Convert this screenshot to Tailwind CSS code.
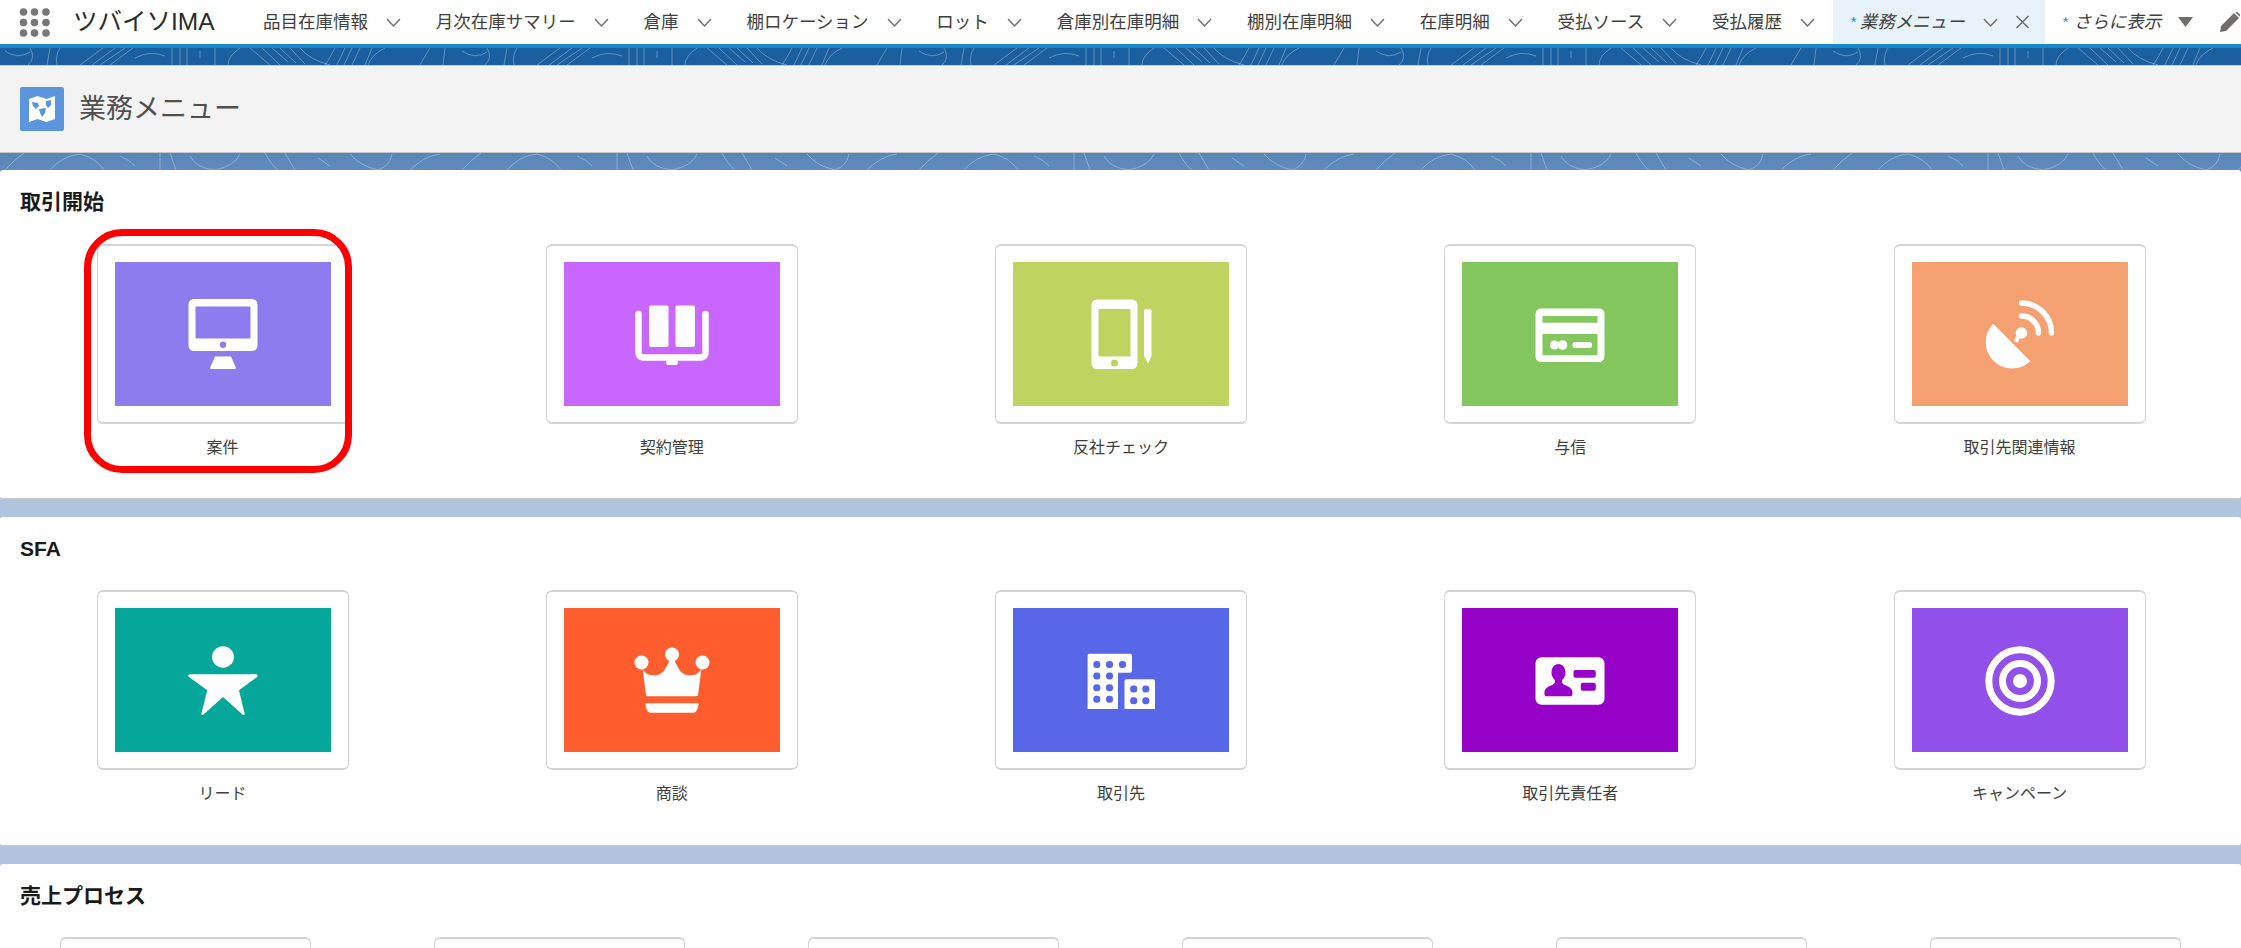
<!DOCTYPE html>
<html lang="ja">
<head>
    <meta charset="UTF-8">
    <title>業務メニュー</title>
    <script src="https://cdn.jsdelivr.net/npm/@tailwindcss/browser@4"></script>
</head>
<body class="h-[948px] overflow-hidden bg-white text-[#3e3e3c] font-['Liberation_Sans','Noto_Sans_CJK_JP',sans-serif]">
    <!-- Top nav -->
    <nav class="flex h-[44px] items-center whitespace-nowrap text-[17.5px]">
        <svg class="ml-[19px] h-[38px] w-[34px] shrink-0" viewBox="0 0 34 38" fill="#777">
            <circle cx="4.5" cy="9" r="3.8"/><circle cx="15.5" cy="9" r="3.8"/><circle cx="27" cy="9" r="3.8"/>
            <circle cx="4.5" cy="19.5" r="3.8"/><circle cx="15.5" cy="19.5" r="3.8"/><circle cx="27" cy="19.5" r="3.8"/>
            <circle cx="4.5" cy="30" r="3.8"/><circle cx="15.5" cy="30" r="3.8"/><circle cx="27" cy="30" r="3.8"/>
        </svg>
        <span class="ml-[20px] w-[190px] shrink-0 text-[24.5px] text-[#2b2b2b]">ツバイソIMA</span>

        <div class="flex h-full items-center gap-[34.8px]">
            <div class="flex items-center gap-[18px]">品目在庫情報<svg class="h-[9px] w-[15px]" viewBox="0 0 15 9" fill="none" stroke="#706e6b" stroke-width="1.4"><path d="M1 1l6.5 7L14 1"/></svg></div>
            <div class="flex items-center gap-[18px]">月次在庫サマリー<svg class="h-[9px] w-[15px]" viewBox="0 0 15 9" fill="none" stroke="#706e6b" stroke-width="1.4"><path d="M1 1l6.5 7L14 1"/></svg></div>
            <div class="flex items-center gap-[18px]">倉庫<svg class="h-[9px] w-[15px]" viewBox="0 0 15 9" fill="none" stroke="#706e6b" stroke-width="1.4"><path d="M1 1l6.5 7L14 1"/></svg></div>
            <div class="flex items-center gap-[18px]">棚ロケーション<svg class="h-[9px] w-[15px]" viewBox="0 0 15 9" fill="none" stroke="#706e6b" stroke-width="1.4"><path d="M1 1l6.5 7L14 1"/></svg></div>
            <div class="flex items-center gap-[18px]">ロット<svg class="h-[9px] w-[15px]" viewBox="0 0 15 9" fill="none" stroke="#706e6b" stroke-width="1.4"><path d="M1 1l6.5 7L14 1"/></svg></div>
            <div class="flex items-center gap-[18px]">倉庫別在庫明細<svg class="h-[9px] w-[15px]" viewBox="0 0 15 9" fill="none" stroke="#706e6b" stroke-width="1.4"><path d="M1 1l6.5 7L14 1"/></svg></div>
            <div class="flex items-center gap-[18px]">棚別在庫明細<svg class="h-[9px] w-[15px]" viewBox="0 0 15 9" fill="none" stroke="#706e6b" stroke-width="1.4"><path d="M1 1l6.5 7L14 1"/></svg></div>
            <div class="flex items-center gap-[18px]">在庫明細<svg class="h-[9px] w-[15px]" viewBox="0 0 15 9" fill="none" stroke="#706e6b" stroke-width="1.4"><path d="M1 1l6.5 7L14 1"/></svg></div>
            <div class="flex items-center gap-[18px]">受払ソース<svg class="h-[9px] w-[15px]" viewBox="0 0 15 9" fill="none" stroke="#706e6b" stroke-width="1.4"><path d="M1 1l6.5 7L14 1"/></svg></div>
            <div class="flex items-center gap-[18px]">受払履歴<svg class="h-[9px] w-[15px]" viewBox="0 0 15 9" fill="none" stroke="#706e6b" stroke-width="1.4"><path d="M1 1l6.5 7L14 1"/></svg></div>
        </div>

        <!-- Active tab -->
        <div class="ml-[18px] flex h-full w-[212px] shrink-0 items-center bg-[#e7f3f9] pl-[17px] italic">
            <span class="mr-[4px] text-[15px] text-[#1589ee]">*</span>業務メニュー
            <svg class="ml-[18px] h-[9px] w-[15px]" viewBox="0 0 15 9" fill="none" stroke="#706e6b" stroke-width="1.4"><path d="M1 1l6.5 7L14 1"/></svg>
            <svg class="ml-[17px] h-[14px] w-[15px]" viewBox="0 0 15 14" fill="none" stroke="#706e6b" stroke-width="1.6"><path d="M1.5 1l12 12M13.5 1l-12 12"/></svg>
        </div>

        <div class="ml-[17px] flex items-center italic">
            <span class="mr-[6px] text-[15px] text-[#1589ee]">*</span>さらに表示
            <svg class="ml-[17px] h-[10px] w-[15px]" viewBox="0 0 15 10" fill="#706e6b"><path d="M0 0h15L7.5 10z"/></svg>
            <svg class="ml-[27px] h-[20px] w-[20px] shrink-0" viewBox="0 0 20 20" fill="#706e6b"><path d="M14 1l5 5L6 19l-6 1 1-6zM15.5.5a1.8 1.8 0 0 1 2.5 0l1.5 1.5a1.8 1.8 0 0 1 0 2.5z"/></svg>
        </div>
    </nav>
    <div class="h-[4px] bg-[#1589d0]"></div>

    <main class="relative h-[900px] overflow-hidden bg-[linear-gradient(#1b5f9e_17px,#5d88ba_112px,#b0c4df_320px)] pt-[17px]">
        <!-- Topographic background lines -->
        <svg class="absolute left-0 top-0 h-[122px] w-full">
            <defs>
                <pattern id="topo" width="457" height="122" patternUnits="userSpaceOnUse">
                    <g fill="none" stroke="#fff" stroke-opacity="0.3" stroke-width="1">
                        <path d="M5 3Q18 12 30 4M30 0Q36 10 28 17M50 0L47 17M60 0Q55 8 57 17"/>
                        <path d="M103 0L80 17M115 0L92 17M125 0L100 17M133 0L110 17M135 10Q150 2 165 8"/>
                        <path d="M172 0V17M180 0V17M187 0V17M200 3V10M215 0V17M240 0Q228 8 228 17"/>
                        <path d="M250 0L270 17M262 0L280 17M272 0L288 14M280 0L296 15M290 0L305 16M300 0Q310 12 330 17"/>
                        <path d="M335 0Q330 10 325 17M345 0L337 17M352 0L344 17M360 0L352 17M372 0L365 17M385 0Q372 6 368 17"/>
                        <path d="M430 0Q424 10 420 17M445 0L443 17"/>
                        <path d="M5 122Q14 112 24 105M50 122Q62 108 80 106Q96 110 104 122M120 108Q130 112 135 118"/>
                        <path d="M160 105V122M170 105L176 122M190 108Q196 120 215 122Q235 118 240 106"/>
                        <path d="M265 105Q272 118 278 122M285 105L295 122M318 110L330 118M350 106Q360 118 378 122Q390 118 392 106"/>
                        <path d="M410 122Q424 108 440 106"/>
                    </g>
                </pattern>
            </defs>
            <rect width="100%" height="122" fill="url(#topo)"/>
        </svg>

        <!-- Page header -->
        <header class="relative flex h-[88px] items-center border-y border-[#c9c9c9] bg-[#f3f3f3] pl-[20px]">
            <div class="flex h-[44px] w-[44px] items-center justify-center rounded-[2px] bg-[#5a95dd]">
                <svg class="h-[26px] w-[28px]" viewBox="0 0 28 26">
                    <path fill="#fff" d="M1 3l8.500-3 9 3L27 0v23l-8.500 3-9-3L1 26z"/>
                    <path fill="#5a95dd" d="M4 6l6 1 1 3-3 3-3-3zM11 13l7-1-1 5-3 4-2-4zM18 5l5-1 0 5-3 3-2-3z"/>
                </svg>
            </div>
            <h1 class="ml-[15px] text-[27px] font-normal text-[#514f4d]">業務メニュー</h1>
        </header>

        <!-- 取引開始 -->
        <section class="relative mt-[17px] h-[329px] rounded-[3px] border-b border-[#c9c9c9] bg-white pl-[14px] pt-[18px]">
            <h2 class="mb-[28px] h-[28px] pl-[6px] text-[21px] font-bold leading-[28px] text-[#1a1a1a]">取引開始</h2>
            <div class="-ml-[16px] grid grid-cols-[repeat(5,449.25px)] justify-items-center text-[16px]">
                <div class="relative flex flex-col items-center">
                    <div class="flex h-[180px] w-[252px] items-start justify-center rounded-[6px] border border-y-2 border-[#d4d4d4] pt-[16px]">
                        <svg class="h-[144px] w-[216px] bg-[#8c7cee]" viewBox="0 0 216 144" fill="#fff">
                            <path fill-rule="evenodd" d="M79 37h58a5.500 5.500 0 0 1 5.500 5.500v41a5.500 5.500 0 0 1-5.500 5.500h-58a5.500 5.500 0 0 1-5.500-5.500v-41a5.500 5.500 0 0 1 5.500-5.500zM81.500 44.500a1 1 0 0 0-1 1v30a1 1 0 0 0 1 1h53a1 1 0 0 0 1-1v-30a1 1 0 0 0-1-1zM108 79.500a3.200 3.200 0 1 0 0 6.400 3.200 3.200 0 0 0 0-6.400z"/>
                            <path d="M100 94.500h16l4.800 11a1 1 0 0 1-1 1.500H96.200a1 1 0 0 1-1-1.500z"/>
                        </svg>
                    </div>
                    <span class="mt-[14px] leading-[20px]">案件</span>
                    <!-- Red highlight -->
                    <div class="absolute -left-[13px] -top-[15px] h-[244px] w-[268px] rounded-[38px] border-[7px] border-[#ff0000]"></div>
                </div>
                <div class="flex flex-col items-center">
                    <div class="flex h-[180px] w-[252px] items-start justify-center rounded-[6px] border border-y-2 border-[#d4d4d4] pt-[16px]">
                        <svg class="h-[144px] w-[216px] bg-[#c966ff]" viewBox="0 0 216 144" fill="#fff">
                            <rect x="85" y="43.500" width="19.500" height="41.500" rx="2"/><rect x="111.500" y="43.500" width="19.500" height="41.500" rx="2"/>
                            <path d="M74.500 52V91a4.500 4.500 0 0 0 4.500 4.500H137a4.500 4.500 0 0 0 4.500-4.500V52" fill="none" stroke="#fff" stroke-width="6.500" stroke-linecap="round"/>
                            <path d="M101.500 97h13l-1 5a1 1 0 0 1-1 1h-9a1 1 0 0 1-1-1z"/>
                        </svg>
                    </div>
                    <span class="mt-[14px] leading-[20px]">契約管理</span>
                </div>
                <div class="flex flex-col items-center">
                    <div class="flex h-[180px] w-[252px] items-start justify-center rounded-[6px] border border-y-2 border-[#d4d4d4] pt-[16px]">
                        <svg class="h-[144px] w-[216px] bg-[#bed360]" viewBox="0 0 216 144" fill="#fff">
                            <path fill-rule="evenodd" d="M84 37.500h35a5.500 5.500 0 0 1 5.500 5.500v58.500a5.500 5.500 0 0 1-5.500 5.500H84a5.500 5.500 0 0 1-5.500-5.500V43a5.500 5.500 0 0 1 5.500-5.500zM86.500 47a1 1 0 0 0-1 1v45.500a1 1 0 0 0 1 1h30a1 1 0 0 0 1-1V48a1 1 0 0 0-1-1zM101.500 97.500a3.500 3.500 0 1 0 0 7 3.500 3.500 0 0 0 0-7z"/>
                            <path d="M133 47h3.500a2 2 0 0 1 2 2v45l-3 6.500a.5.5 0 0 1-1 0L131 94V49a2 2 0 0 1 2-2z"/>
                        </svg>
                    </div>
                    <span class="mt-[14px] leading-[20px]">反社チェック</span>
                </div>
                <div class="flex flex-col items-center">
                    <div class="flex h-[180px] w-[252px] items-start justify-center rounded-[6px] border border-y-2 border-[#d4d4d4] pt-[16px]">
                        <svg class="h-[144px] w-[216px] bg-[#84c75f]" viewBox="0 0 216 144" fill="#fff">
                            <path fill-rule="evenodd" d="M79 46.500h58a5.500 5.500 0 0 1 5.500 5.500v42.500a5.500 5.500 0 0 1-5.500 5.500H79a5.500 5.500 0 0 1-5.500-5.500V52a5.500 5.500 0 0 1 5.500-5.500zM80.500 54v6.700h55V54zM80.500 72v21.300h55V72z"/>
                            <circle cx="92.500" cy="83" r="4.500"/><circle cx="100.500" cy="83" r="4.800"/><rect x="110.500" y="80" width="19.500" height="6" rx="2.500"/>
                        </svg>
                    </div>
                    <span class="mt-[14px] leading-[20px]">与信</span>
                </div>
                <div class="flex flex-col items-center">
                    <div class="flex h-[180px] w-[252px] items-start justify-center rounded-[6px] border border-y-2 border-[#d4d4d4] pt-[16px]">
                        <svg class="h-[144px] w-[216px] bg-[#f5a070]" viewBox="0 0 216 144" fill="#fff">
                            <path d="M81.300 62.700A25.700 25.700 0 0 0 117.300 99.300z" stroke="#fff" stroke-width="1.500" stroke-linejoin="round"/>
                            <circle cx="109.500" cy="71" r="5.800"/>
                            <path d="M104 80l3-9" stroke="#fff" stroke-width="4"/>
                            <path d="M109.500 54a17 17 0 0 1 17 17" fill="none" stroke="#fff" stroke-width="5.500" stroke-linecap="round"/>
                            <path d="M109.500 41a30 30 0 0 1 30 30" fill="none" stroke="#fff" stroke-width="5.500" stroke-linecap="round"/>
                        </svg>
                    </div>
                    <span class="mt-[14px] leading-[20px]">取引先関連情報</span>
                </div>
            </div>
        </section>

        <!-- SFA -->
        <section class="relative mt-[18px] h-[329px] rounded-[3px] border-b border-[#c9c9c9] bg-white pl-[14px] pt-[18px]">
            <h2 class="mb-[27px] h-[28px] pl-[6px] text-[21px] font-bold leading-[28px] text-[#1a1a1a]">SFA</h2>
            <div class="-ml-[16px] grid grid-cols-[repeat(5,449.25px)] justify-items-center text-[16px]">
                <div class="flex flex-col items-center">
                    <div class="flex h-[180px] w-[252px] items-start justify-center rounded-[6px] border border-y-2 border-[#d4d4d4] pt-[16px]">
                        <svg class="h-[144px] w-[216px] bg-[#04a79a]" viewBox="0 0 216 144" fill="#fff">
                            <ellipse cx="108" cy="49" rx="11" ry="10.700"/>
                            <path d="M75 66.300h66a1.500 1.500 0 0 1 1 2.700L124 82.300l5.500 23a1 1 0 0 1-2 1.200L108 89l-19.500 17.500a1 1 0 0 1-2-1.200l5.800-23L74 69a1.500 1.500 0 0 1 1-2.700z"/>
                        </svg>
                    </div>
                    <span class="mt-[14px] leading-[20px]">リード</span>
                </div>
                <div class="flex flex-col items-center">
                    <div class="flex h-[180px] w-[252px] items-start justify-center rounded-[6px] border border-y-2 border-[#d4d4d4] pt-[16px]">
                        <svg class="h-[144px] w-[216px] bg-[#ff5d2d]" viewBox="0 0 216 144" fill="#fff">
                            <ellipse cx="77.500" cy="54.500" rx="7" ry="7"/><ellipse cx="108" cy="46.500" rx="7" ry="7"/><ellipse cx="138.500" cy="54.500" rx="7" ry="7"/>
                            <path d="M78.500 60L82 87a1.500 1.500 0 0 0 1.500 1.300h49A1.500 1.500 0 0 0 134 87l3.500-27c-2 7-10 8-15 7s-9-7-12-15h-5c-3 8-7 14-12 15s-13 0-15-7z"/>
                            <path d="M82.500 95.300h51a1 1 0 0 1 1 1.200c-.5 4-2 8.200-5 8.200h-43c-3 0-4.500-4.200-5-8.200a1 1 0 0 1 1-1.200z"/>
                        </svg>
                    </div>
                    <span class="mt-[14px] leading-[20px]">商談</span>
                </div>
                <div class="flex flex-col items-center">
                    <div class="flex h-[180px] w-[252px] items-start justify-center rounded-[6px] border border-y-2 border-[#d4d4d4] pt-[16px]">
                        <svg class="h-[144px] w-[216px] bg-[#5867e8]" viewBox="0 0 216 144" fill="#fff">
                            <path d="M76 45.700h41a2 2 0 0 1 2 2v15a2 2 0 0 1-2 2h-12V101H74.600V47.700a2 2 0 0 1 1.400-2z"/>
                            <path d="M113.500 71.300H140a2 2 0 0 1 2 2V101h-30.500V73.300a2 2 0 0 1 2-2z"/>
                            <g fill="#5867e8">
                                <rect x="80.300" y="53" width="7" height="7" rx="3"/><rect x="93" y="53" width="7" height="7" rx="3"/><rect x="106" y="53" width="7" height="7" rx="3"/>
                                <rect x="80.300" y="64.500" width="7" height="7" rx="3"/><rect x="93" y="64.500" width="7" height="7" rx="3"/>
                                <rect x="80.300" y="76.200" width="7" height="7" rx="3"/><rect x="93" y="76.200" width="7" height="7" rx="3"/>
                                <rect x="80.300" y="87.800" width="7" height="7" rx="3"/><rect x="93" y="87.800" width="7" height="7" rx="3"/>
                                <rect x="117.200" y="77.500" width="7" height="7" rx="3"/><rect x="129.300" y="77.500" width="7" height="7" rx="3"/>
                                <rect x="117.200" y="89.200" width="7" height="7" rx="3"/><rect x="129.300" y="89.200" width="7" height="7" rx="3"/>
                            </g>
                        </svg>
                    </div>
                    <span class="mt-[14px] leading-[20px]">取引先</span>
                </div>
                <div class="flex flex-col items-center">
                    <div class="flex h-[180px] w-[252px] items-start justify-center rounded-[6px] border border-y-2 border-[#d4d4d4] pt-[16px]">
                        <svg class="h-[144px] w-[216px] bg-[#9602c7]" viewBox="0 0 216 144" fill="#fff">
                            <rect x="73.500" y="49.300" width="69" height="47.400" rx="6"/>
                            <g fill="#9602c7">
                                <path d="M96.500 56c4 0 7 3.800 7 8.500 0 3.500-1.800 6-3.500 7.500v2c0 1.500 1.500 2.500 5 4 3.500 1.500 5.500 3.500 5.500 7.500 0 2-1 2.800-2.500 2.800H85c-1.500 0-2.600-.8-2.600-2.800 0-4 2-6 5.500-7.500 3.500-1.500 5-2.500 5-4v-2c-1.700-1.500-3.400-4-3.400-7.500 0-4.700 2.800-8.500 7-8.500z"/>
                                <rect x="111.500" y="62" width="22.300" height="7.700" rx="2"/>
                                <rect x="118.800" y="74.700" width="15" height="8" rx="2"/>
                            </g>
                        </svg>
                    </div>
                    <span class="mt-[14px] leading-[20px]">取引先責任者</span>
                </div>
                <div class="flex flex-col items-center">
                    <div class="flex h-[180px] w-[252px] items-start justify-center rounded-[6px] border border-y-2 border-[#d4d4d4] pt-[16px]">
                        <svg class="h-[144px] w-[216px] bg-[#9050e9]" viewBox="0 0 216 144" fill="#fff">
                            <circle cx="108" cy="73" r="31.200" fill="none" stroke="#fff" stroke-width="7"/>
                            <circle cx="108" cy="73" r="17.500" fill="none" stroke="#fff" stroke-width="7"/>
                            <circle cx="108" cy="73" r="7"/>
                        </svg>
                    </div>
                    <span class="mt-[14px] leading-[20px]">キャンペーン</span>
                </div>
            </div>
        </section>

        <!-- 売上プロセス -->
        <section class="relative mt-[18px] h-[329px] rounded-[3px] bg-white pl-[14px] pt-[18px]">
            <h2 class="mb-[27px] h-[28px] pl-[6px] text-[21px] font-bold leading-[28px] text-[#1a1a1a]">売上プロセス</h2>
            <div class="-ml-[16px] grid grid-cols-[repeat(6,374px)] justify-items-center">
                <div class="h-[180px] w-[251px] rounded-[6px] border border-y-2 border-[#d4d4d4]"></div>
                <div class="h-[180px] w-[251px] rounded-[6px] border border-y-2 border-[#d4d4d4]"></div>
                <div class="h-[180px] w-[251px] rounded-[6px] border border-y-2 border-[#d4d4d4]"></div>
                <div class="h-[180px] w-[251px] rounded-[6px] border border-y-2 border-[#d4d4d4]"></div>
                <div class="h-[180px] w-[251px] rounded-[6px] border border-y-2 border-[#d4d4d4]"></div>
                <div class="h-[180px] w-[251px] rounded-[6px] border border-y-2 border-[#d4d4d4]"></div>
            </div>
        </section>
    </main>
</body>
</html>
